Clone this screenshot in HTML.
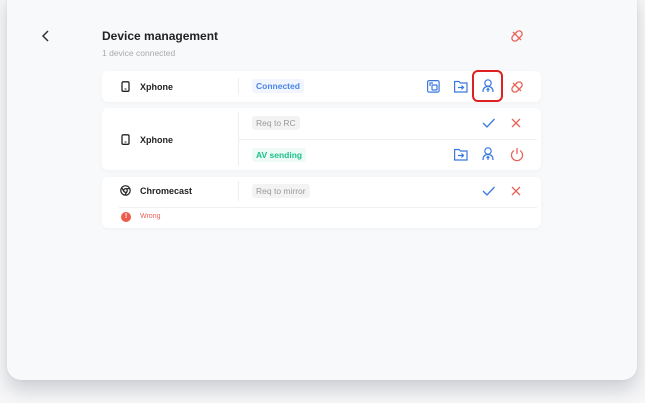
<!DOCTYPE html>
<html><head><meta charset="utf-8"><style>
*{margin:0;padding:0;box-sizing:border-box}
body{width:645px;height:403px;background:#f7f7f8;font-family:"Liberation Sans",sans-serif;position:relative;overflow:hidden}
.panel{position:absolute;left:7px;top:-12px;width:630px;height:392px;background:#f8f9fb;border-radius:14px;box-shadow:0 10px 18px rgba(60,70,90,.22),0 0 3px rgba(0,0,0,.06)}
.abs{position:absolute}
.card{position:absolute;left:102px;width:439px;background:#fff;border-radius:6px;box-shadow:0 1px 4px rgba(0,0,0,.04)}
.name{position:absolute;font-size:9px;font-weight:bold;color:#222}
.vl{position:absolute;left:136px;width:1px;background:#eceef1}
.tag{position:absolute;font-size:8.5px;padding:2px 4px;border-radius:3px;font-weight:bold}
svg{position:absolute;overflow:visible}
</style></head><body>
<div class="panel"></div>
<svg style="left:41px;top:30px" width="10" height="12" viewBox="0 0 10 12"><path d="M7 1 L2 6 L7 11" fill="none" stroke="#333" stroke-width="1.5"/></svg>
<div class="abs" style="left:102px;top:29px;font-size:12px;font-weight:bold;color:#222">Device management</div>
<div class="abs" style="left:102px;top:48px;font-size:8.5px;color:#aaa">1 device connected</div>
<svg style="left:510px;top:29px" width="14" height="14" viewBox="0 0 14 14"><g fill="none" stroke="#e8635a" stroke-width="1.3"><rect x="1" y="4" width="12" height="6" rx="3" transform="rotate(-45 7 7)"/><path d="M3 3 L11 11"/></g></svg>

<!-- card1 -->
<div class="card" style="top:71px;height:31px">
<svg style="left:19px;top:10px" width="9" height="11" viewBox="0 0 9 11"><rect x="1" y="0.8" width="7" height="9.5" rx="1.3" fill="none" stroke="#222" stroke-width="1.3"/><rect x="3.5" y="7.5" width="2" height="1" fill="#222"/></svg>
<div class="name" style="left:38px;top:11px">Xphone</div>
<div class="vl" style="top:7px;height:17px"></div>
<div class="tag" style="left:150px;top:8px;background:#f1f5fd;color:#4a86e8">Connected</div>
<svg style="left:325px;top:9px" width="13" height="13" viewBox="0 0 13 13"><g fill="none" stroke="#3a78e0" stroke-width="1.2"><rect x="0.6" y="0.6" width="11.5" height="11.5" rx="1.5"/><rect x="5" y="5" width="5" height="5" rx=".6"/><path d="M3 6 V3 H6"/></g></svg>
<svg style="left:352px;top:9px" width="14" height="13" viewBox="0 0 14 13"><g fill="none" stroke="#3a78e0" stroke-width="1.2"><path d="M0.6 1.5 H5 L6.5 3 H13 V12 H0.6 Z"/><path d="M4 7.5 H9.5 M7.5 5.5 L9.5 7.5 L7.5 9.5"/></g></svg>
<div class="abs" style="left:370px;top:-1px;width:31px;height:32px;border:2px solid #e02020;border-radius:6px"></div>
<svg style="left:380px;top:8px" width="12" height="14" viewBox="0 0 12 14"><g fill="none" stroke="#3a78e0" stroke-width="1.2"><circle cx="6" cy="4" r="3.2"/><path d="M1 13 C1 9 3 7.5 6 7.5 C9 7.5 11 9 11 13 M6 13 V9.5 M4.5 11 L6 9.5 L7.5 11"/></g></svg>
<svg style="left:408px;top:9px" width="14" height="14" viewBox="0 0 14 14"><g fill="none" stroke="#e8635a" stroke-width="1.3"><rect x="1" y="4" width="12" height="6" rx="3" transform="rotate(-45 7 7)"/><path d="M3 3 L11 11"/></g></svg>
</div>

<!-- card2 -->
<div class="card" style="top:108px;height:62px">
<svg style="left:19px;top:26px" width="9" height="11" viewBox="0 0 9 11"><rect x="1" y="0.8" width="7" height="9.5" rx="1.3" fill="none" stroke="#222" stroke-width="1.3"/><rect x="3.5" y="7.5" width="2" height="1" fill="#222"/></svg>
<div class="name" style="left:38px;top:27px">Xphone</div>
<div class="vl" style="top:4px;height:54px"></div>
<div class="abs" style="left:137px;top:31px;width:298px;height:1px;background:#eef0f3"></div>
<div class="tag" style="left:150px;top:8px;background:#f3f3f4;color:#999;font-weight:normal">Req to RC</div>
<svg style="left:380px;top:10px" width="13" height="10" viewBox="0 0 13 10"><path d="M1 5 L5 9 L12.5 1" fill="none" stroke="#3a78e0" stroke-width="1.3"/></svg>
<svg style="left:409px;top:10px" width="10" height="10" viewBox="0 0 10 10"><path d="M1 1 L9 9 M9 1 L1 9" fill="none" stroke="#e8635a" stroke-width="1.3"/></svg>
<div class="tag" style="left:150px;top:40px;background:#eefaf5;color:#19c28a">AV sending</div>
<svg style="left:352px;top:40px" width="14" height="13" viewBox="0 0 14 13"><g fill="none" stroke="#3a78e0" stroke-width="1.2"><path d="M0.6 1.5 H5 L6.5 3 H13 V12 H0.6 Z"/><path d="M4 7.5 H9.5 M7.5 5.5 L9.5 7.5 L7.5 9.5"/></g></svg>
<svg style="left:380px;top:39px" width="12" height="14" viewBox="0 0 12 14"><g fill="none" stroke="#3a78e0" stroke-width="1.2"><circle cx="6" cy="4" r="3.2"/><path d="M1 13 C1 9 3 7.5 6 7.5 C9 7.5 11 9 11 13 M6 13 V9.5 M4.5 11 L6 9.5 L7.5 11"/></g></svg>
<svg style="left:408px;top:39px" width="14" height="14" viewBox="0 0 14 14"><g fill="none" stroke="#e8635a" stroke-width="1.3"><path d="M4 3.5 A5.5 5.5 0 1 0 10 3.5"/><path d="M7 1 V7"/></g></svg>
</div>

<!-- card3 -->
<div class="card" style="top:177px;height:51px">
<svg style="left:18px;top:8px" width="11" height="11" viewBox="0 0 11 11"><g fill="none" stroke="#222" stroke-width="1.2"><circle cx="5.5" cy="5.5" r="4.7"/><circle cx="5.5" cy="5.5" r="1.8"/><path d="M5.5 3.7 H10 M3.9 6.4 L1.6 2.5 M7.1 6.4 L4.8 10.2"/></g></svg>
<div class="name" style="left:38px;top:9px">Chromecast</div>
<div class="vl" style="top:4px;height:20px"></div>
<div class="abs" style="left:17px;top:30px;width:418px;height:1px;background:#eef0f3"></div>
<div class="tag" style="left:150px;top:7px;background:#f3f3f4;color:#999;font-weight:normal">Req to mirror</div>
<svg style="left:380px;top:9px" width="13" height="10" viewBox="0 0 13 10"><path d="M1 5 L5 9 L12.5 1" fill="none" stroke="#3a78e0" stroke-width="1.3"/></svg>
<svg style="left:409px;top:9px" width="10" height="10" viewBox="0 0 10 10"><path d="M1 1 L9 9 M9 1 L1 9" fill="none" stroke="#e8635a" stroke-width="1.3"/></svg>
<div class="abs" style="left:19px;top:35px;width:10px;height:10px;border-radius:50%;background:#ee5b4a;color:#fff;font-size:7px;font-weight:bold;text-align:center;line-height:10px">!</div>
<div class="abs" style="left:38px;top:36px;font-size:7px;color:#e8635a">Wrong</div>
</div>
</body></html>
